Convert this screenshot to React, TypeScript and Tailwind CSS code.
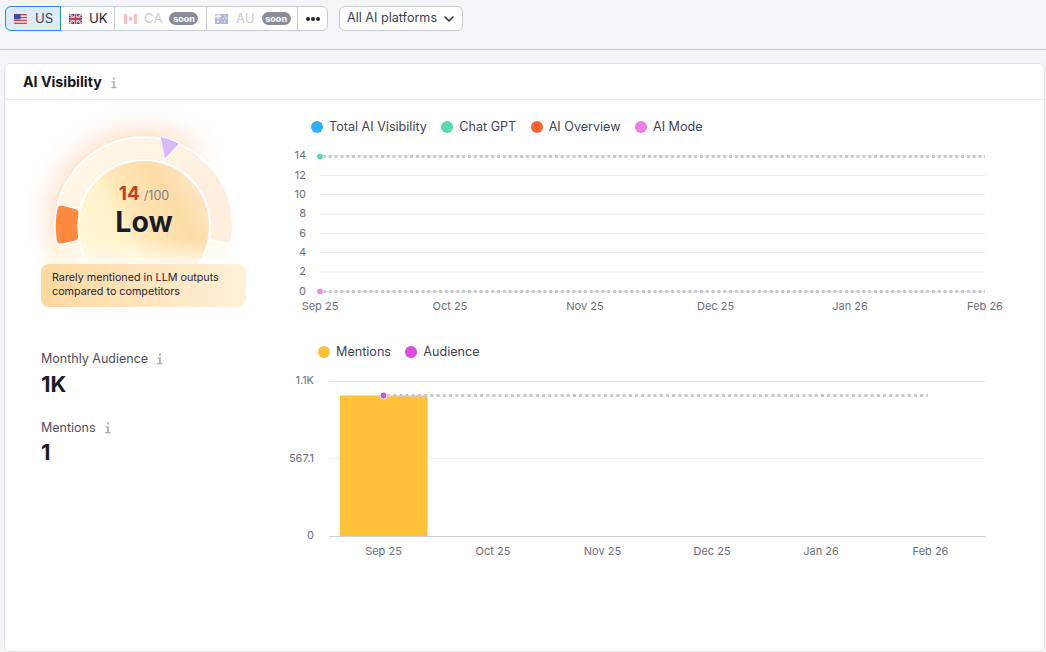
import { ChevronDown } from "lucide-react";

const font = { fontFamily: "Inter, 'Noto Sans', sans-serif" };

// gauge geometry, in page coordinates
const CX = 144;
const CY = 226;
const R1 = 89;
const R2 = 66;

function pt(r: number, deg: number) {
  const a = (deg * Math.PI) / 180;
  return `${(CX + r * Math.cos(a)).toFixed(2)} ${(CY + r * Math.sin(a)).toFixed(2)}`;
}

// ring sector with softened corners
function ringPath(from: number, to: number, c = 4) {
  const large = to - from > 180 ? 1 : 0;
  const dOut = ((c / R1) * 180) / Math.PI;
  const dIn = ((c / R2) * 180) / Math.PI;
  return [
    `M${pt(R1, from + dOut)}`,
    `A${R1} ${R1} 0 ${large} 1 ${pt(R1, to - dOut)}`,
    `Q${pt(R1, to)} ${pt(R1 - c, to)}`,
    `L${pt(R2 + c, to)}`,
    `Q${pt(R2, to)} ${pt(R2, to - dIn)}`,
    `A${R2} ${R2} 0 ${large} 0 ${pt(R2, from + dIn)}`,
    `Q${pt(R2, from)} ${pt(R2 + c, from)}`,
    `L${pt(R1 - c, from)}`,
    `Q${pt(R1, from)} ${pt(R1, from + dOut)}`,
    "Z",
  ].join(" ");
}

function InfoIcon({ className = "" }: { className?: string }) {
  return (
    <svg width="8" height="12" viewBox="0 0 8 12" className={className} fill="#a9acb6">
      <rect x="3" y="0.5" width="2" height="2" rx="0.6" />
      <path d="M1.6 4.2h3.2v5.9h1.6v1.2H1.2v-1.2h1.9V5.4H1.6z" />
    </svg>
  );
}

function FlagUS() {
  return (
    <svg width="13" height="10" viewBox="0 0 13 10" className="rounded-[1px]">
      <rect width="13" height="10" fill="#f3f4f8" />
      <rect y="0" width="13" height="1.4" fill="#d6424e" />
      <rect y="2.8" width="13" height="1.4" fill="#d6424e" />
      <rect y="5.7" width="13" height="1.4" fill="#d6424e" />
      <rect y="8.6" width="13" height="1.4" fill="#d6424e" />
      <rect width="6.5" height="5.4" fill="#3f4f9b" />
    </svg>
  );
}

function FlagUK() {
  return (
    <svg width="13" height="10" viewBox="0 0 13 10" className="rounded-[1px]">
      <rect width="13" height="10" fill="#2c3c8f" />
      <path d="M0 0l13 10M13 0L0 10" stroke="#fff" strokeWidth="2" />
      <path d="M0 0l13 10M13 0L0 10" stroke="#d13a46" strokeWidth="0.8" />
      <path d="M6.5 0v10M0 5h13" stroke="#fff" strokeWidth="3.2" />
      <path d="M6.5 0v10M0 5h13" stroke="#d13a46" strokeWidth="1.8" />
    </svg>
  );
}

function FlagCA() {
  return (
    <svg width="13" height="10" viewBox="0 0 13 10" className="opacity-30">
      <rect width="13" height="10" fill="#fff" />
      <rect width="3.2" height="10" fill="#e3303f" />
      <rect x="9.8" width="3.2" height="10" fill="#e3303f" />
      <path d="M6.5 2l.8 1.5 1-.4-.3 2 .9.2-1.4 1.4H6.8V8h-.6V6.7H5.5L4.1 5.3l.9-.2-.3-2 1 .4z" fill="#e3303f" />
    </svg>
  );
}

function FlagAU() {
  return (
    <svg width="13" height="10" viewBox="0 0 13 10" className="opacity-40">
      <rect width="13" height="10" fill="#3b4fa6" />
      <rect width="6" height="4.6" fill="#8a6f9e" />
      <path d="M0 2.3h6M3 0v4.6" stroke="#fff" strokeWidth="1" />
      <circle cx="3" cy="7.4" r="0.9" fill="#fff" />
      <circle cx="9.8" cy="2" r="0.6" fill="#fff" />
      <circle cx="8.3" cy="4.6" r="0.6" fill="#fff" />
      <circle cx="11.2" cy="4.2" r="0.6" fill="#fff" />
      <circle cx="9.8" cy="7.8" r="0.6" fill="#fff" />
    </svg>
  );
}

function SoonBadge() {
  return (
    <span className="flex h-[13px] w-[29px] items-center justify-center rounded-full bg-[#8a8d99] text-[9px] font-bold leading-none text-white">
      soon
    </span>
  );
}

function Toolbar() {
  return (
    <div className="flex h-[50px] items-start gap-[11px] border-b border-[#c7cad3] bg-[#f4f5f9] pl-[5px] pt-[6px]">
      <div className="flex h-[25px] rounded-[6px] border border-[#c7cad3] bg-white text-[13.2px] leading-none">
        <button className="-m-px flex h-[25px] w-[56px] items-center gap-[8px] rounded-l-[6px] border border-[#2a8fd6] bg-[#dcebf9] pl-[8px] text-[#3a3f4d]">
          <FlagUS />
          US
        </button>
        <button className="flex w-[55px] items-center gap-[7px] border-r border-[#c7cad3] pl-[9px] text-[#1d2233]">
          <FlagUK />
          UK
        </button>
        <button className="flex w-[92px] items-center border-r border-[#c7cad3] pl-[9px] text-[#c9cbd2]">
          <FlagCA />
          <span className="ml-[7px] mr-[7px]">CA</span>
          <SoonBadge />
        </button>
        <button className="flex w-[91px] items-center border-r border-[#c7cad3] pl-[8px] text-[#c9cbd2]">
          <FlagAU />
          <span className="ml-[8px] mr-[7px]">AU</span>
          <SoonBadge />
        </button>
        <button className="flex w-[29px] items-center justify-center gap-[1px]">
          <span className="h-[4px] w-[4px] rounded-full bg-[#1d2233]" />
          <span className="h-[4px] w-[4px] rounded-full bg-[#1d2233]" />
          <span className="h-[4px] w-[4px] rounded-full bg-[#1d2233]" />
        </button>
      </div>
      <button className="flex h-[25px] w-[124px] items-center justify-between rounded-[6px] border border-[#c7cad3] bg-white pl-[7px] pr-[5px] text-[12.6px] text-[#3a3f4d]">
        All AI platforms
        <ChevronDown size={16} strokeWidth={2.4} color="#2b303c" />
      </button>
    </div>
  );
}

function Gauge() {
  return (
    <svg width="250" height="215" viewBox="20 100 250 215" className="ml-[15px] block">
      <defs>
        <filter id="glow" x="-40%" y="-40%" width="180%" height="180%">
          <feGaussianBlur stdDeviation="14" />
        </filter>
        <filter id="glowSoft" x="-40%" y="-40%" width="180%" height="180%">
          <feGaussianBlur stdDeviation="10" />
        </filter>
        <linearGradient id="ringFill" x1="0" y1="0" x2="1" y2="0.3">
          <stop offset="0" stopColor="#fff8e9" />
          <stop offset="0.55" stopColor="#fff4e2" />
          <stop offset="1" stopColor="#fdeee0" />
        </linearGradient>
        <linearGradient id="discFill" x1="0.02" y1="0.85" x2="0.95" y2="0.3">
          <stop offset="0" stopColor="#fff8da" />
          <stop offset="0.42" stopColor="#fff1c8" />
          <stop offset="0.5" stopColor="#ffe8ba" />
          <stop offset="0.8" stopColor="#fddba4" />
          <stop offset="1" stopColor="#fde5c2" />
        </linearGradient>
        <linearGradient id="fadeDown" x1="0" y1="0" x2="0" y2="1">
          <stop offset="0.82" stopColor="#fff" />
          <stop offset="1" stopColor="#000" />
        </linearGradient>
        <mask id="fade" maskUnits="userSpaceOnUse" x="20" y="100" width="250" height="215">
          <rect x="20" y="100" width="250" height="170" fill="url(#fadeDown)" />
        </mask>
      </defs>

      {/* orange halo behind the dial */}
      <path d="M50 235 A94 94 0 0 1 200 150 L170 200 L90 240 Z" fill="#ffc79b" filter="url(#glow)" opacity="0.7" />
      <circle cx="62" cy="248" r="14" fill="#ffe9bd" filter="url(#glowSoft)" opacity="0.8" />

      <g mask="url(#fade)">
        <circle cx={CX} cy={CY} r={R1} fill="#fff9ec" />
      </g>
      <path d={ringPath(168, 372)} fill="url(#ringFill)" stroke="#fff" strokeWidth="2" strokeLinejoin="round" />
      <g mask="url(#fade)">
        <circle cx={CX} cy={CY} r={R2} fill="url(#discFill)" stroke="#fff" strokeWidth="2" />
      </g>

      {/* value segments */}
      <path d={ringPath(167.5, 194.5, 5)} fill="#ff8a3f" stroke="#fff" strokeWidth="1.5" strokeLinejoin="round" />
      <path d="M160 135.8 A90 90 0 0 1 180 143.5 L164.5 160 Z" fill="#d9b8fa" stroke="#fff" strokeWidth="1.2" strokeLinejoin="round" />
    </svg>
  );
}

function Legend({ items, className }: { items: { label: string; color: string }[]; className: string }) {
  return (
    <div className={`flex items-center gap-[14.4px] text-[12.6px] leading-[20px] text-[#3f4452] ${className}`}>
      {items.map((i) => (
        <div key={i.label} className="flex items-center gap-[6px]">
          <span className="h-[12px] w-[12px] rounded-full" style={{ background: i.color }} />
          {i.label}
        </div>
      ))}
    </div>
  );
}

const tick = { fontSize: 11, fill: "#6c6e79", fontFamily: font.fontFamily };

function Dot({ x, y, color }: { x: number; y: number; color: string }) {
  return <circle cx={x} cy={y} r="3.5" fill={color} stroke="#fff" strokeWidth="1" />;
}

function VisibilityChart() {
  const rows: [string, number][] = [
    ["14", 156],
    ["12", 175.5],
    ["10", 194.5],
    ["8", 214],
    ["6", 233.5],
    ["4", 252.5],
    ["2", 272],
    ["0", 291.5],
  ];
  const months: [string, number][] = [
    ["Sep 25", 320],
    ["Oct 25", 450],
    ["Nov 25", 585],
    ["Dec 25", 715.5],
    ["Jan 26", 850],
  ];
  return (
    <svg width="740" height="171" viewBox="285 145 740 171" className="mt-[8px] block">
      {rows.map(([label, y]) => (
        <g key={label}>
          <line x1="320" x2="985" y1={y} y2={y} stroke="#e8e9ef" />
          <text x="306" y={y + 3} textAnchor="end" {...tick}>
            {label}
          </text>
        </g>
      ))}
      <line x1="323" x2="985" y1="156.5" y2="156.5" stroke="#c6c8d0" strokeWidth="3" strokeDasharray="3 2.8" />
      <line x1="323" x2="985" y1="291.5" y2="291.5" stroke="#c6c8d0" strokeWidth="3" strokeDasharray="3 2.8" />
      <Dot x={320} y={156.5} color="#59dcaa" />
      <Dot x={320} y={291.5} color="#f285ec" />
      {months.map(([label, x]) => (
        <text key={label} x={x} y="310" textAnchor="middle" {...tick}>
          {label}
        </text>
      ))}
      <text x="985" y="310" textAnchor="middle" {...tick}>
        Feb 26
      </text>
    </svg>
  );
}

function AudienceChart() {
  const months: [string, number][] = [
    ["Sep 25", 383.5],
    ["Oct 25", 493],
    ["Nov 25", 602.5],
    ["Dec 25", 712],
    ["Jan 26", 821],
    ["Feb 26", 930.5],
  ];
  return (
    <svg width="740" height="195" viewBox="285 370 740 195" className="block">
      <line x1="329" x2="985" y1="381.5" y2="381.5" stroke="#e4e5ec" />
      <line x1="329" x2="985" y1="458.5" y2="458.5" stroke="#eeeff4" />
      <rect x="340" y="395.5" width="87.5" height="140.5" rx="1" fill="#ffc03a" />
      <line x1="329" x2="985" y1="536.5" y2="536.5" stroke="#cfd1d9" />
      <line x1="387" x2="928" y1="395.5" y2="395.5" stroke="#c6c8d0" strokeWidth="3" strokeDasharray="3 3.2" />
      <Dot x={383.5} y={395.5} color="#dd4ae0" />
      <text x="314" y="384" textAnchor="end" {...tick}>
        1.1K
      </text>
      <text x="314" y="462" textAnchor="end" {...tick}>
        567.1
      </text>
      <text x="314" y="539" textAnchor="end" {...tick}>
        0
      </text>
      {months.map(([label, x]) => (
        <text key={label} x={x} y="555" textAnchor="middle" {...tick}>
          {label}
        </text>
      ))}
    </svg>
  );
}

export default function App() {
  return (
    <div className="h-[652px] w-[1046px] overflow-hidden bg-[#f4f5f9]" style={font}>
      <Toolbar />
      <div className="ml-[4px] mt-[13px] h-[589px] w-[1041px] rounded-[6px] border border-[#e1e2e9] bg-white">
        <div className="flex h-[36px] items-center gap-[8px] border-b border-[#e6e7ed] pl-[18px]">
          <h2 className="text-[14.2px] font-bold text-[#141824]">AI Visibility</h2>
          <InfoIcon className="mt-[2px]" />
        </div>

        <div className="flex">
          {/* Score and totals */}
          <div className="w-[280px] shrink-0">
            <div className="relative">
              <Gauge />
              <div className="absolute left-[15px] top-[82px] w-[248px] text-center">
                <div className="flex items-baseline justify-center gap-[4px] leading-[24px]">
                  <span className="text-[19px] font-bold text-[#c5401a]">14</span>
                  <span className="text-[12.5px] text-[#7b7d87]">/100</span>
                </div>
                <div className="text-[28.5px] font-bold leading-[27px] text-[#191d2a]">Low</div>
              </div>
            </div>
            <div className="relative ml-[36px] mt-[-51px] h-[43px] w-[205px] rounded-[8px] bg-gradient-to-r from-[#fdd8a0] to-[#fff1d9] pl-[11px] pt-[7px] text-[10.75px] leading-[14px] text-[#1f2433]">
              Rarely mentioned in LLM outputs
              <br />
              compared to competitors
            </div>

            <div className="ml-[36px] mt-[42px] flex items-center gap-[8px] text-[12.5px] leading-[20px] text-[#4d505c]">
              Monthly Audience
              <InfoIcon />
            </div>
            <div className="ml-[36px] text-[22px] font-bold leading-[30px] text-[#191d2a]">1K</div>
            <div className="ml-[36px] mt-[19px] flex items-center gap-[8px] text-[12.5px] leading-[20px] text-[#4d505c]">
              Mentions
              <InfoIcon />
            </div>
            <div className="ml-[36px] text-[22px] font-bold leading-[28px] text-[#191d2a]">1</div>
          </div>

          {/* Charts */}
          <div className="flex-1">
            <Legend
              className="ml-[26px] mt-[17px]"
              items={[
                { label: "Total AI Visibility", color: "#2eaefc" },
                { label: "Chat GPT", color: "#59dcaa" },
                { label: "AI Overview", color: "#ff6331" },
                { label: "AI Mode", color: "#f07ce8" },
              ]}
            />
            <VisibilityChart />
            <Legend
              className="ml-[33px] mt-[26px]"
              items={[
                { label: "Mentions", color: "#ffc03a" },
                { label: "Audience", color: "#dd4ae0" },
              ]}
            />
            <div className="mt-[8px]">
              <AudienceChart />
            </div>
          </div>
        </div>
      </div>
    </div>
  );
}
